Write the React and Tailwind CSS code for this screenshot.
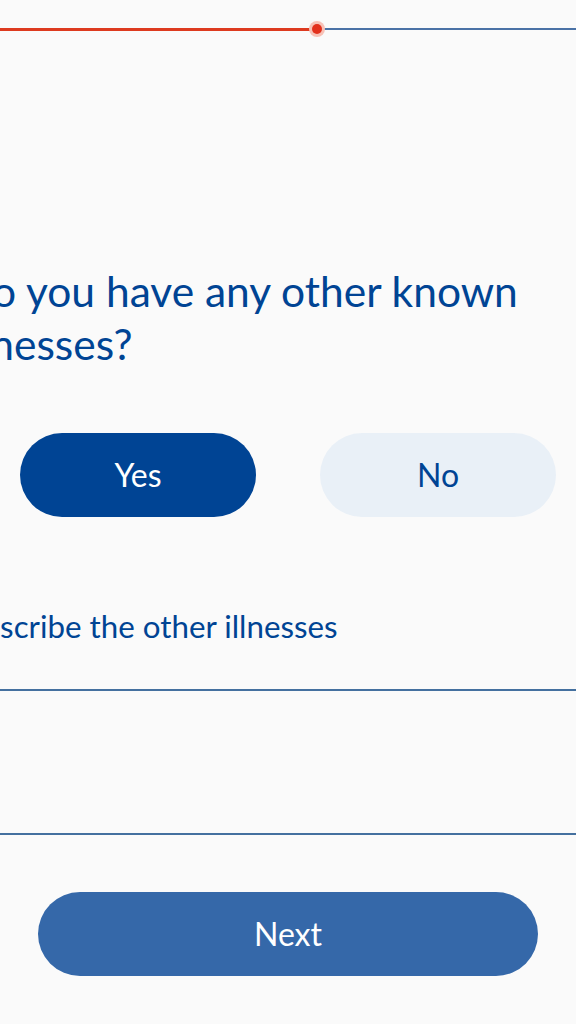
import React, { useState } from "react";

export default function App() {
  const [answer, setAnswer] = useState("yes");
  const [details, setDetails] = useState("");

  return (
    <div className="min-h-screen bg-[#fafafa] font-['Lato','Noto_Sans',sans-serif] overflow-hidden">
      {/* progress */}
      <div className="relative flex items-center h-4 mt-[21px]">
        <div className="w-[317px] h-[3px] bg-[#dd3a1f]" />
        <div className="flex-1 h-[2px] bg-[#4a72a6]" />
        <div className="absolute left-[309px] top-0 w-4 h-4 rounded-full bg-[#f7c1b6] flex items-center justify-center">
          <div className="w-[10px] h-[10px] rounded-full bg-[#e2301c]" />
        </div>
      </div>

      <main className="flex flex-col">
        <h1 className="-ml-[40px] pr-5 mt-[228px] text-[42.5px] leading-[1.24] text-[#004494]">
          Do you have any other known illnesses?
        </h1>

        <div className="flex justify-between px-5 mt-[63px]">
          <button
            onClick={() => setAnswer("yes")}
            className={`w-[236px] h-[84px] rounded-full text-[32px] ${
              answer === "yes" ? "bg-[#004494] text-white" : "bg-[#e9f0f7] text-[#004494]"
            }`}
          >
            Yes
          </button>
          <button
            onClick={() => setAnswer("no")}
            className={`w-[236px] h-[84px] rounded-full text-[32px] ${
              answer === "no" ? "bg-[#004494] text-white" : "bg-[#e9f0f7] text-[#004494]"
            }`}
          >
            No
          </button>
        </div>

        <label className="-ml-[40px] mt-[91px] text-[31.3px] leading-[1.2] text-[#004494]">
          Describe the other illnesses
        </label>
        <textarea
          value={details}
          onChange={(e) => setDetails(e.target.value)}
          className="mt-[43px] h-[146px] bg-transparent border-y-2 border-[#44709f] outline-none resize-none text-[28px] text-[#004494] p-3"
        />

        <div className="px-[38px] mt-[57px]">
          <button className="w-full h-[84px] rounded-full bg-[#3568a9] text-white text-[32px]">
            Next
          </button>
        </div>
      </main>
    </div>
  );
}
